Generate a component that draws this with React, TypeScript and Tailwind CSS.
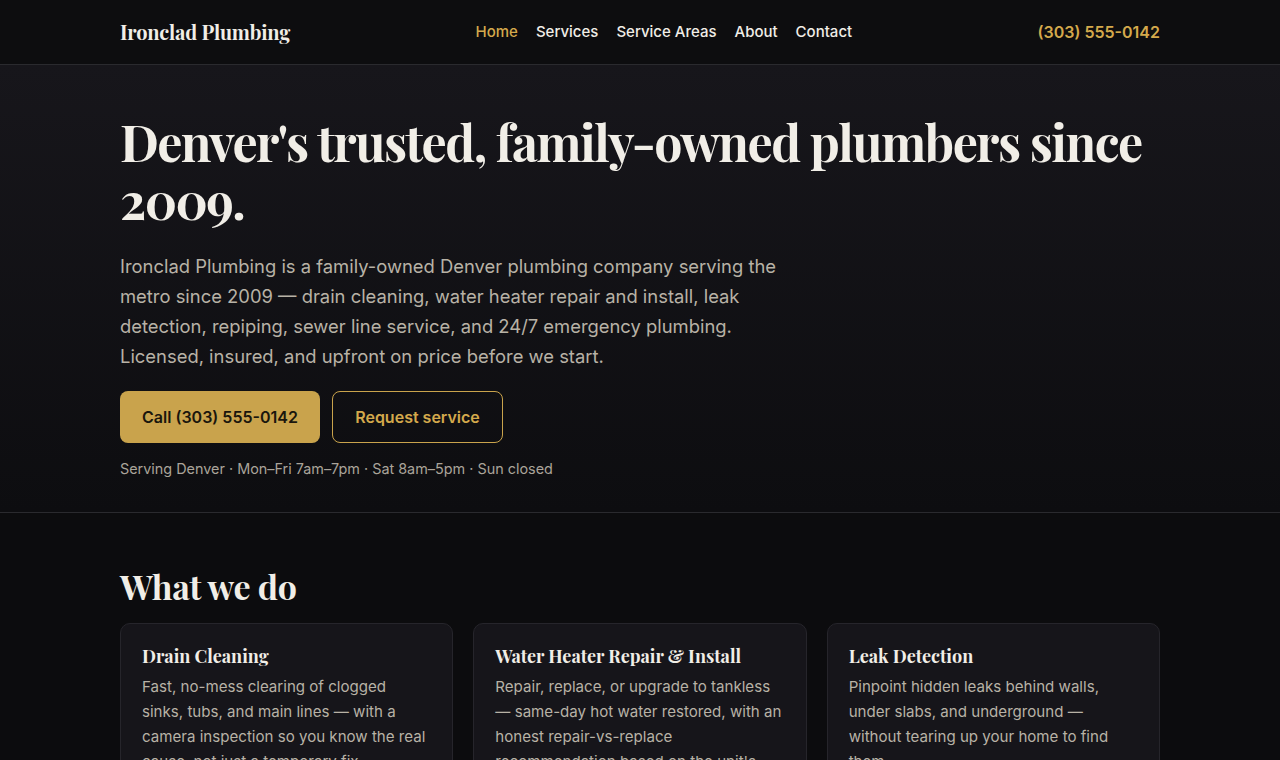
const SERVICES = [
	{
		title: "Drain Cleaning",
		body: "Fast, no-mess clearing of clogged sinks, tubs, and main lines — with a camera inspection so you know the real cause, not just a temporary fix.",
	},
	{
		title: "Water Heater Repair & Install",
		body: "Repair, replace, or upgrade to tankless — same-day hot water restored, with an honest repair-vs-replace recommendation based on the unit's age and condition.",
	},
	{
		title: "Leak Detection",
		body: "Pinpoint hidden leaks behind walls, under slabs, and underground — without tearing up your home to find them.",
	},
];

const NAV = ["Home", "Services", "Service Areas", "About", "Contact"];

const serif = "font-['Playfair_Display','Liberation_Serif',serif]";

export default function App() {
	return (
		<div className="min-h-screen bg-[#0c0c0e] font-['Inter',sans-serif] text-[#f1eee7]">
			{/* Header */}
			<header className="border-b border-[#2a2a2e] bg-[#0d0d0f]">
				<div className="mx-auto flex h-16 max-w-[1040px] items-center justify-between">
					<a href="#" className={`${serif} text-[20px] font-bold tracking-[-0.01em]`}>
						Ironclad Plumbing
					</a>
					<nav className="flex items-center gap-[18px] text-[15px] font-medium">
						{NAV.map((item) => (
							<a
								key={item}
								href="#"
								className={item === "Home" ? "text-[#d4a94c]" : "text-[#f1eee7]"}
							>
								{item}
							</a>
						))}
					</nav>
					<a href="#" className="text-[16px] font-semibold text-[#d4a94c]">
						(303) 555-0142
					</a>
				</div>
			</header>

			{/* Hero */}
			<section className="border-b border-[#2a2a2e] bg-gradient-to-b from-[#17161b] to-[#0d0d10]">
				<div className="mx-auto max-w-[1040px] pb-[32px] pt-[48px]">
					<h1 className={`${serif} text-[50px] font-bold leading-[58px] tracking-[-0.03em]`}>
						Denver's trusted, family-owned plumbers since 2009.
					</h1>
					<p className="mt-[22px] max-w-2xl text-[18.4px] leading-[30px] text-[#b8b2a6]">
						Ironclad Plumbing is a family-owned Denver plumbing company serving the
						metro since 2009 — drain cleaning, water heater repair and install, leak
						detection, repiping, sewer line service, and 24/7 emergency plumbing.
						Licensed, insured, and upfront on price before we start.
					</p>
					<div className="mt-[20px] flex gap-3">
						<a
							href="#"
							className="flex h-[52px] w-[200px] items-center justify-center rounded-lg bg-[#c9a34c] text-[16px] font-semibold text-[#1a160d]"
						>
							Call (303) 555-0142
						</a>
						<a
							href="#"
							className="flex h-[52px] w-[171px] items-center justify-center rounded-lg border border-[#c9a34c] text-[16px] font-semibold text-[#d4a94c]"
						>
							Request service
						</a>
					</div>
					<p className="mt-[15px] text-[14.4px] text-[#aaa49a]">
						Serving Denver · Mon–Fri 7am–7pm · Sat 8am–5pm · Sun closed
					</p>
				</div>
			</section>

			{/* Services */}
			<section>
				<div className="mx-auto max-w-[1040px] pt-[51px]">
					<h2 className={`${serif} text-[34px] font-bold leading-[44px] tracking-[-0.01em]`}>
						What we do
					</h2>
					<div className="mt-[15px] grid grid-cols-3 gap-5">
						{SERVICES.map((s) => (
							<div
								key={s.title}
								className="rounded-[10px] border border-[#26252b] bg-[#16151a] px-[21px] pb-6 pt-[18px]"
							>
								<h3 className={`${serif} text-[18px] font-bold leading-[28px]`}>{s.title}</h3>
								<p className="mt-[4px] text-[15.1px] leading-[25px] text-[#b8b2a6]">{s.body}</p>
							</div>
						))}
					</div>
				</div>
			</section>
		</div>
	);
}
